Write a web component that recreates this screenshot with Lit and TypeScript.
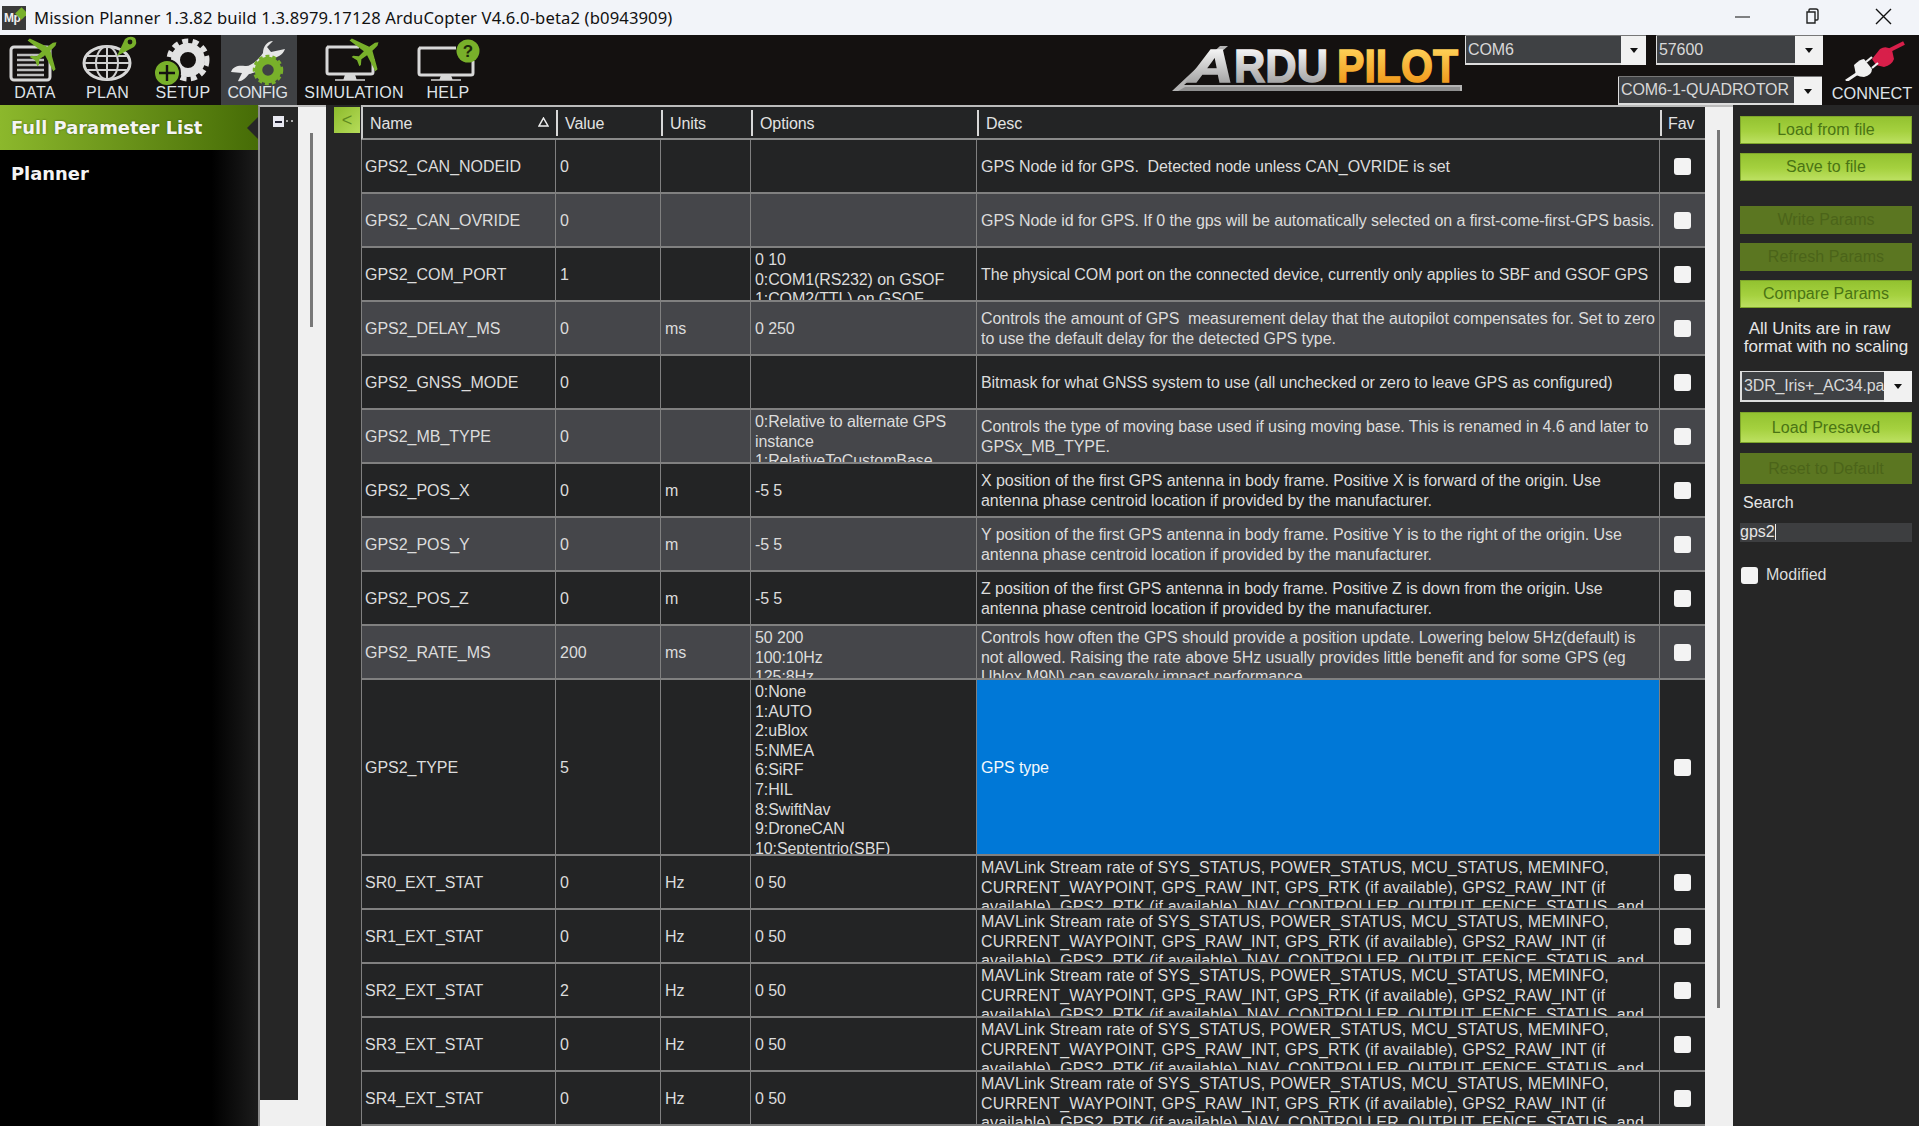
import { LitElement, html, css } from "lit";
import { customElement } from "lit/decorators.js";

const SR =
  "MAVLink Stream rate of SYS_STATUS, POWER_STATUS, MCU_STATUS, MEMINFO,\nCURRENT_WAYPOINT, GPS_RAW_INT, GPS_RTK (if available), GPS2_RAW_INT (if\navailable), GPS2_RTK (if available), NAV_CONTROLLER_OUTPUT, FENCE_STATUS, and";
const ANT = "antenna phase centroid location if provided by the manufacturer.";

interface Row { n: string; v: string; u: string; o: string; d: string; alt?: boolean; tall?: boolean; sel?: boolean; sr?: boolean; }

const ROWS: Row[] = [
  { n: "GPS2_CAN_NODEID", v: "0", u: "", o: "", d: "GPS Node id for GPS.  Detected node unless CAN_OVRIDE is set" },
  { n: "GPS2_CAN_OVRIDE", v: "0", u: "", o: "", d: "GPS Node id for GPS. If 0 the gps will be automatically selected on a first-come-first-GPS basis.", alt: true },
  { n: "GPS2_COM_PORT", v: "1", u: "", o: "0 10\n0:COM1(RS232) on GSOF\n1:COM2(TTL) on GSOF", d: "The physical COM port on the connected device, currently only applies to SBF and GSOF GPS" },
  { n: "GPS2_DELAY_MS", v: "0", u: "ms", o: "0 250", d: "Controls the amount of GPS  measurement delay that the autopilot compensates for. Set to zero\nto use the default delay for the detected GPS type.", alt: true },
  { n: "GPS2_GNSS_MODE", v: "0", u: "", o: "", d: "Bitmask for what GNSS system to use (all unchecked or zero to leave GPS as configured)" },
  { n: "GPS2_MB_TYPE", v: "0", u: "", o: "0:Relative to alternate GPS\ninstance\n1:RelativeToCustomBase", d: "Controls the type of moving base used if using moving base. This is renamed in 4.6 and later to\nGPSx_MB_TYPE.", alt: true },
  { n: "GPS2_POS_X", v: "0", u: "m", o: "-5 5", d: "X position of the first GPS antenna in body frame. Positive X is forward of the origin. Use\n" + ANT },
  { n: "GPS2_POS_Y", v: "0", u: "m", o: "-5 5", d: "Y position of the first GPS antenna in body frame. Positive Y is to the right of the origin. Use\n" + ANT, alt: true },
  { n: "GPS2_POS_Z", v: "0", u: "m", o: "-5 5", d: "Z position of the first GPS antenna in body frame. Positive Z is down from the origin. Use\n" + ANT },
  { n: "GPS2_RATE_MS", v: "200", u: "ms", o: "50 200\n100:10Hz\n125:8Hz", d: "Controls how often the GPS should provide a position update. Lowering below 5Hz(default) is\nnot allowed. Raising the rate above 5Hz usually provides little benefit and for some GPS (eg\nUblox M9N) can severely impact performance", alt: true },
  { n: "GPS2_TYPE", v: "5", u: "", o: "0:None\n1:AUTO\n2:uBlox\n5:NMEA\n6:SiRF\n7:HIL\n8:SwiftNav\n9:DroneCAN\n10:Septentrio(SBF)", d: "GPS type", tall: true, sel: true },
  { n: "SR0_EXT_STAT", v: "0", u: "Hz", o: "0 50", d: SR, sr: true },
  { n: "SR1_EXT_STAT", v: "0", u: "Hz", o: "0 50", d: SR, sr: true },
  { n: "SR2_EXT_STAT", v: "2", u: "Hz", o: "0 50", d: SR, sr: true },
  { n: "SR3_EXT_STAT", v: "0", u: "Hz", o: "0 50", d: SR, sr: true },
  { n: "SR4_EXT_STAT", v: "0", u: "Hz", o: "0 50", d: SR, sr: true },
];

const PLANE = "M0,-15 L2,-12 L2.5,-5 L20,3 L20,6 L2.5,2 L2,9 L6,13 L6,15 L0,13 L-6,15 L-6,13 L-2,9 L-2.5,2 L-20,6 L-20,3 L-2.5,-5 L-2,-12 Z";

const ICONS: Record<string, unknown> = {
  DATA: html`<svg class="ic" viewBox="0 0 70 46">
    <rect x="11" y="12" width="39" height="33" rx="3" fill="none" stroke="#d8d8d8" stroke-width="3"/>
    <path d="M17 20H44M17 25H44M17 30H44M17 35H44M17 40H44" stroke="#bdbdbd" stroke-width="2.4"/>
    <path d="${PLANE}" transform="translate(45,17) rotate(50)" fill="#78b02a"/></svg>`,
  PLAN: html`<svg class="ic" viewBox="0 0 75 46">
    <ellipse cx="37" cy="28" rx="23" ry="16.5" fill="none" stroke="#d8d8d8" stroke-width="3"/>
    <ellipse cx="37" cy="28" rx="11" ry="16.5" fill="none" stroke="#d0d0d0" stroke-width="2"/>
    <path d="M37 12V44M16 21H58M14 28H60M16 35H58" stroke="#d0d0d0" stroke-width="2"/>
    <path d="M47 21 L55 4 Q60 0 65 3 Q68 8 64 12 Z" fill="#78b02a"/>
    <circle cx="60" cy="7" r="2.4" fill="#1a1a10"/></svg>`,
  SETUP: html`<svg class="ic" viewBox="0 0 76 46">
    <circle cx="43" cy="25" r="12.5" fill="none" stroke="#e2e2e2" stroke-width="9"/>
    <circle cx="43" cy="25" r="19" fill="none" stroke="#e2e2e2" stroke-width="5" stroke-dasharray="6 4.4"/>
    <circle cx="22" cy="38" r="13" fill="#78b02a" stroke="#141110" stroke-width="2"/>
    <path d="M14 38H30M22 30V46" stroke="#141110" stroke-width="2.4"/></svg>`,
  CONFIG: html`<svg class="ic" viewBox="0 0 76 46">
    <path d="M10 37 C12 31 18 30 24 31 C30 32 38 24 42 18 C42 12 46 6 52 6 L46 12 L50 17 L64 14 C62 20 56 23 50 23 C44 30 36 38 28 39 C24 44 20 47 17 46 L21 38 Z" fill="#e6e6e6"/>
    <circle cx="47" cy="35" r="9.5" fill="none" stroke="#78b02a" stroke-width="7.5"/>
    <circle cx="47" cy="35" r="14" fill="none" stroke="#78b02a" stroke-width="2.5" stroke-dasharray="4 3"/></svg>`,
  SIMULATION: html`<svg class="ic" viewBox="0 0 114 46">
    <path d="M30 12H62M76 24V37Q76 39 74 39H32Q30 39 30 37V14Q30 12 32 12" fill="none" stroke="#d8d8d8" stroke-width="3"/>
    <path d="M49 39H57L59 45H47Z M38 45H68" fill="#d8d8d8" stroke="#d8d8d8" stroke-width="1.5"/>
    <path d="${PLANE}" transform="translate(70,17) rotate(50)" fill="#78b02a"/></svg>`,
  HELP: html`<svg class="ic" viewBox="11 0 74 46">
    <path d="M19 13H56M73 26V38Q73 40 71 40H21Q19 40 19 38V15Q19 13 21 13" fill="none" stroke="#d8d8d8" stroke-width="3"/>
    <path d="M42 40H50L52 45H40Z M31 45H61" fill="#d8d8d8" stroke="#d8d8d8" stroke-width="1.5"/>
    <circle cx="68" cy="16" r="11.5" fill="#78b02a"/>
    <text x="68" y="22" text-anchor="middle" class="q">?</text></svg>`,
};

const NAV = [
  { l: "DATA", w: 70, k: "" }, { l: "PLAN", w: 75, k: "" }, { l: "SETUP", w: 76, k: "" },
  { l: "CONFIG", w: 76, on: true, k: "tight" }, { l: "SIMULATION", w: 114, k: "" }, { l: "HELP", w: 74, k: "" },
];

@customElement("app-root")
export class AppRoot extends LitElement {
  static styles = css`
    :host { display: block; width: 1919px; height: 1126px; overflow: hidden; font-family: "Liberation Sans", Arial, sans-serif; font-size: 16px; color: #e2e2e2; background: #262626; }
    .title { height: 35px; background: #f2f4f9; display: flex; align-items: center; color: #111; }
    .appicon { width: 24px; height: 24px; margin-left: 2px; background: #3a3a3a; position: relative; overflow: hidden; }
    .appicon span { position: absolute; left: 2px; top: 5px; font-size: 12px; font-weight: 700; color: #eee; letter-spacing: -.5px; }
    .appicon i { position: absolute; right: 0; top: 3px; width: 9px; height: 9px; background: #78b02a; transform: rotate(45deg); }
    .ttext { margin-left: 8px; font-family: "Noto Sans", sans-serif; font-size: 16.6px; letter-spacing: .13px; white-space: nowrap; }
    .winbtns { margin-left: auto; display: flex; }
    .winbtns svg { display: block; width: 71px; height: 35px; }
    .tb { height: 70px; background: #141110; display: flex; }
    .nav { display: flex; width: 1170px; flex: none; }
    .navi { display: flex; flex-direction: column; align-items: center; flex: none; }
    .navi.on { background: #3f4144; }
    .ic { display: block; height: 46px; width: 100%; overflow: visible; }
    .q { font: 700 17px "Liberation Sans", sans-serif; fill: #1d2a0a; }
    .navl { height: 24px; line-height: 24px; font-size: 16px; letter-spacing: .3px; color: #dfe3e8; white-space: nowrap; }
    .navl.tight { letter-spacing: -.35px; padding-right: 3px; }
    .logo { width: 295px; height: 70px; flex: none; display: block; }
    .lt { font: italic 900 47px "Liberation Sans", sans-serif; stroke: url(#lg); stroke-width: 1.4; }
    .lr { font: 900 46px "Liberation Sans", sans-serif; stroke: url(#lg); stroke-width: 1.4; }
    .lp { font: 900 46px "Liberation Sans", sans-serif; stroke: url(#lo); stroke-width: 1.4; }
    .combos { width: 357px; flex: none; display: flex; flex-direction: column; justify-content: space-between; height: 70px; }
    .c1 { display: flex; gap: 10px; }
    .c2 { display: flex; justify-content: flex-end; }
    .combo { display: flex; height: 30px; box-sizing: border-box; border-top: 1px solid #777; }
    .combo.low { height: 29px; }
    .ctext { background: #3f4144; border-left: 1px solid #ddd; border-bottom: 2px solid #ddd; color: #d8d8d8; padding: 4px 2px 0 2px; box-sizing: border-box; white-space: nowrap; overflow: hidden; line-height: 20px; letter-spacing: -.1px; }
    .low .ctext { padding-top: 3px; }
    .cbtn { background: #f1f1f1; width: 25px; flex: none; display: flex; align-items: center; justify-content: center; }
    .arrow { width: 0; height: 0; border-left: 4px solid transparent; border-right: 4px solid transparent; border-top: 5px solid #111; }
    .w156 { width: 156px; } .w139 { width: 139px; } .w176 { width: 176px; }
    .w28 { width: 28px; }
    .conn { width: 97px; flex: none; display: flex; flex-direction: column; align-items: center; }
    .conn svg { display: block; width: 97px; height: 46px; }
    .conn .navl { margin-left: 3px; letter-spacing: 0; font-size: 16.3px; }
    .main { height: 1021px; display: flex; overflow: hidden; }
    .menu { width: 258px; flex: none; background: linear-gradient(to right, #000 82%, #1c1c1c); }
    .mi { height: 45px; display: flex; align-items: center; padding-left: 11px; font: 700 17.9px "DejaVu Sans", sans-serif; color: #f4f4f4; position: relative; box-sizing: border-box; }
    .mi.on { background: linear-gradient(to right, #8cb82c, #466c06); text-shadow: 0 0 2px #3a5a08; }
    .notch { position: absolute; right: 0; top: 12px; width: 0; height: 0; border-top: 11px solid transparent; border-bottom: 11px solid transparent; border-right: 11px solid #262626; }
    .mi.pl { height: 47px; }
    .tree { width: 68px; flex: none; box-sizing: border-box; border-left: 2px solid #8a8a8a; border-top: 2px solid #bbb; background: #f0f0f0; position: relative; display: grid; grid-template-columns: 38px 28px; grid-template-rows: 993px 1fr; }
    .tpane { background: #262626; position: relative; overflow: hidden; }
    .minus { position: absolute; left: 13px; top: 9px; width: 11px; height: 11px; background: #e8e8f0; display: flex; align-items: center; justify-content: center; }
    .minus i { width: 7px; height: 2px; background: #223; display: block; }
    .dots { position: absolute; left: 26px; top: 13px; width: 7px; border-top: 2px dotted #aaa; }
    .tsb { background: #f0f0f0; position: relative; }
    .thumb { position: absolute; width: 3px; background: #777; left: 12px; }
    .t1 { top: 26px; height: 194px; }
    .hs { grid-column: 1 / 3; background: #f0f0f0; }
    .split { width: 35px; flex: none; padding: 2px 0 0 8px; box-sizing: border-box; }
    .back { width: 26px; height: 26px; background: linear-gradient(135deg, #8dbb2c, #b6dc5a); color: #5f8a1e; display: flex; align-items: center; justify-content: center; font-size: 18px; }
    .grid { width: 1344px; flex: none; border-top: 2px solid #bbb; box-sizing: border-box; background: #232425; }
    .row { display: grid; grid-template-columns: 195px 105px 90px 226px 683px 45px; height: 54px; box-sizing: border-box; border-bottom: 2px solid #808080; background: #232425; }
    .row.alt { background: #45464a; }
    .row.tall { height: 176px; }
    .row.hd { height: 33px; border-bottom: 2px solid #8a8a8a; border-left: 2px solid #ccc; }
    .h { display: flex; align-items: center; padding: 2px 0 0 7px; border-right: 2px solid #d8d8d8; margin: 3px 0 2px; box-sizing: border-box; justify-content: space-between; letter-spacing: -.1px; }
    .h.last { border-right: 0; padding-left: 6px; }
    .h svg { width: 11px; height: 10px; margin-right: 7px; margin-top: -5px; }
    .c { display: flex; align-items: safe center; overflow: hidden; padding: 2px 0 0 4px; border-right: 1px solid #808080; box-sizing: border-box; white-space: pre; line-height: 19.6px; color: #dcdcdc; min-width: 0; }
    .c.first { border-left: 1px solid #808080; padding-left: 3px; letter-spacing: -.03px; }
    .c.d { letter-spacing: -.07px; }
    .c.d.sr { letter-spacing: .15px; }
    .c.o { letter-spacing: -.1px; }
    .c.sel { background: #0078d7; color: #f4f8fc; }
    .c.f { justify-content: center; align-items: center; padding: 0; border-right: 0; }
    .cb { width: 17px; height: 17px; background: #f3f3f3; border-radius: 3px; display: block; flex: none; }
    .vs { width: 28px; flex: none; background: #f0f0f0; position: relative; border-top: 2px solid #bbb; box-sizing: border-box; }
    .t2 { top: 23px; height: 878px; left: 12px; }
    .side { width: 186px; flex: none; background: #262626; display: flex; flex-direction: column; padding: 11px 7px 0 7px; box-sizing: border-box; }
    .btn { height: 28px; flex: none; display: flex; align-items: center; justify-content: center; background: linear-gradient(#93c230, #a5d13f 55%, #bce061); border: 1px solid #7ea52b; box-sizing: border-box; color: #4a7414; letter-spacing: .05px; margin-bottom: 9px; }
    .btn.off { background: #5b7621; border-color: #5b7621; color: #4b6419; }
    .btn.big { height: 31px; margin-bottom: 10px; }
    .gap { height: 16px; flex: none; }
    .note { text-align: center; line-height: 18px; height: 36px; margin: 3px 0 15px; font-size: 17px; letter-spacing: 0; color: #e6e6e6; white-space: nowrap; flex: none; }
    .l1 { padding-right: 13px; }
    .sel3 { display: flex; height: 31px; flex: none; margin-bottom: 10px; }
    .sel3 .ctext { width: 144px; border-top: 1px solid #ddd; border-left: 2px solid #ddd; line-height: 24px; padding-top: 2px; letter-spacing: -.15px; }
    .sel3 .cbtn { width: 28px; }
    .slabel { margin: 0 0 11px 3px; height: 18px; line-height: 18px; flex: none; color: #e6e6e6; }
    .search { height: 19px; background: #3d3e40; flex: none; line-height: 18px; color: #e6e6e6; white-space: nowrap; }
    .search i { display: inline-block; width: 1px; height: 16px; background: #eee; vertical-align: -3px; }
    .mod { display: flex; align-items: center; gap: 8px; margin: 24px 0 0 1px; color: #dcdcdc; flex: none; }
  `;

  private cell(r: Row) {
    return html`<div class="row ${r.alt ? "alt" : ""} ${r.tall ? "tall" : ""}">
      <div class="c first">${r.n}</div>
      <div class="c">${r.v}</div>
      <div class="c">${r.u}</div>
      <div class="c o">${r.o}</div>
      <div class="c d ${r.sel ? "sel" : ""} ${r.sr ? "sr" : ""}">${r.d}</div>
      <div class="c f"><span class="cb"></span></div>
    </div>`;
  }

  render() {
    return html`
      <div class="title">
        <div class="appicon"><span>Mp</span><i></i></div>
        <div class="ttext">Mission Planner 1.3.82 build 1.3.8979.17128 ArduCopter V4.6.0-beta2 (b0943909)</div>
        <div class="winbtns">
          <svg viewBox="0 0 71 35"><path d="M29 17H44" stroke="#333" stroke-width="1.2"/></svg>
          <svg viewBox="0 0 71 35"><path d="M30 12H38V23H30Z M32 12V10Q32 9 33 9H39Q41 9 41 11V19Q41 20 40 20H38" fill="none" stroke="#222" stroke-width="1.4"/></svg>
          <svg viewBox="0 0 71 35"><path d="M28 9L43 24M43 9L28 24" stroke="#111" stroke-width="1.4"/></svg>
        </div>
      </div>
      <div class="tb">
        <div class="nav">
          ${NAV.map((n) => html`<div class="navi ${n.on ? "on" : ""}" style="width:${n.w}px">${ICONS[n.l]}<div class="navl ${n.k}">${n.l}</div></div>`)}
        </div>
        <svg class="logo" viewBox="0 0 295 70">
          <defs>
            <linearGradient id="lg" gradientUnits="userSpaceOnUse" x1="0" y1="12" x2="0" y2="48"><stop offset="0" stop-color="#fafafa"/><stop offset="1" stop-color="#a4a4a4"/></linearGradient>
            <linearGradient id="lo" gradientUnits="userSpaceOnUse" x1="0" y1="12" x2="0" y2="48"><stop offset="0" stop-color="#ffd35a"/><stop offset="1" stop-color="#f09a1c"/></linearGradient>
          </defs>
          <path d="M2 56 L50 11 L58 11 L14 50 L292 50 L292 56 Z" fill="#b4b4b4"/>
          <path d="M15 52H290V56H8Z" fill="#8e8e8e"/>
          <text class="lt" x="18" y="47" fill="url(#lg)" textLength="46" lengthAdjust="spacingAndGlyphs">A</text>
          <text class="lr" x="64" y="47" fill="url(#lg)" textLength="94" lengthAdjust="spacingAndGlyphs">RDU</text>
          <text class="lp" x="167" y="47" fill="url(#lo)" textLength="121" lengthAdjust="spacingAndGlyphs">PILOT</text>
        </svg>
        <div class="combos">
          <div class="c1">
            <div class="combo"><div class="ctext w156">COM6</div><div class="cbtn"><span class="arrow"></span></div></div>
            <div class="combo"><div class="ctext w139">57600</div><div class="cbtn w28"><span class="arrow"></span></div></div>
          </div>
          <div class="c2">
            <div class="combo low"><div class="ctext w176">COM6-1-QUADROTOR</div><div class="cbtn w28"><span class="arrow"></span></div></div>
          </div>
        </div>
        <div class="conn">
          <svg viewBox="0 0 97 46">
            <path d="M50 24 L58 14 Q64 10 70 15 L72 24 Q70 30 62 32 L54 30 Z" fill="#d81f4a"/>
            <path d="M66 16 L82 8" stroke="#d81f4a" stroke-width="4"/>
            <path d="M32 30 Q38 24 42 24 L50 34 Q50 40 42 42 Q38 42 34 40 Z" fill="#f0f0f0"/>
            <path d="M36 38 L24 46" stroke="#f0f0f0" stroke-width="3"/>
            <path d="M44 27 L50 22 M50 33 L56 28" stroke="#f0f0f0" stroke-width="2.2"/>
          </svg>
          <div class="navl">CONNECT</div>
        </div>
      </div>
      <div class="main">
        <div class="menu">
          <div class="mi on">Full Parameter List<span class="notch"></span></div>
          <div class="mi pl">Planner</div>
        </div>
        <div class="tree">
          <div class="tpane"><div class="minus"><i></i></div><div class="dots"></div></div>
          <div class="tsb"><div class="thumb t1"></div></div>
          <div class="hs"></div>
        </div>
        <div class="split"><div class="back">&lt;</div></div>
        <div class="grid">
          <div class="row hd">
            <div class="h"><span>Name</span><svg viewBox="0 0 11 10"><path d="M5.5 1L10 9H1Z" fill="none" stroke="#eee" stroke-width="1.5"/></svg></div>
            <div class="h">Value</div><div class="h">Units</div><div class="h">Options</div><div class="h">Desc</div><div class="h last">Fav</div>
          </div>
          ${ROWS.map((r) => this.cell(r))}
        </div>
        <div class="vs"><div class="thumb t2"></div></div>
        <div class="side">
          <div class="btn">Load from file</div>
          <div class="btn">Save to file</div>
          <div class="gap"></div>
          <div class="btn off">Write Params</div>
          <div class="btn off">Refresh Params</div>
          <div class="btn">Compare Params</div>
          <div class="note"><div class="l1">All Units are in raw</div><div>format with no scaling</div></div>
          <div class="sel3"><div class="ctext">3DR_Iris+_AC34.param</div><div class="cbtn"><span class="arrow"></span></div></div>
          <div class="btn big">Load Presaved</div>
          <div class="btn big off">Reset to Default</div>
          <div class="slabel">Search</div>
          <div class="search">gps2<i></i></div>
          <div class="mod"><span class="cb"></span>Modified</div>
        </div>
      </div>
    `;
  }
}
